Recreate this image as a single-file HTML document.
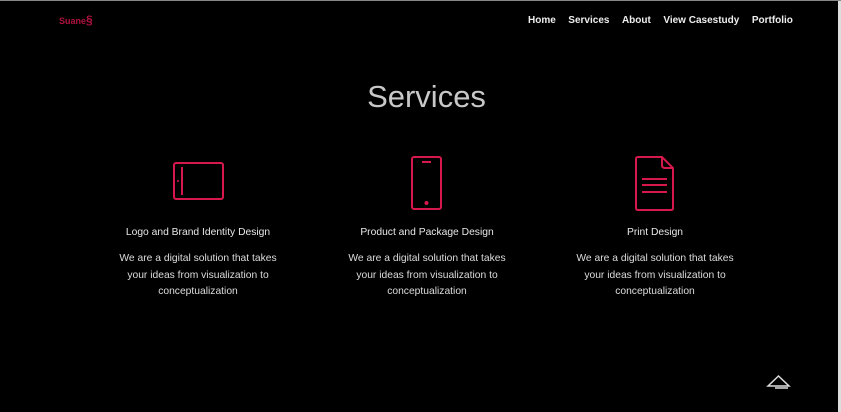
<!DOCTYPE html>
<html><head><style>
html,body{margin:0;padding:0;}
body{width:841px;height:411px;background:#000;position:relative;overflow:hidden;font-family:"Liberation Sans",sans-serif;border-top:1px solid #888;box-sizing:border-box;}
.edge{position:absolute;right:0;top:0;width:3px;height:411px;background:#ddd;}
.logo{position:absolute;left:59px;top:12px;color:#b0123f;font-size:9px;font-weight:bold;}
.nav{position:absolute;top:14px;left:528px;color:#eee;font-size:10px;font-weight:bold;white-space:nowrap;}
.nav span{margin-right:12.5px;}
h1{position:absolute;top:78px;left:6px;width:841px;text-align:center;margin:0;font-weight:normal;font-size:31px;color:#c8c8c8;}
.col{position:absolute;top:226px;width:200px;text-align:center;color:#e8e8e8;font-size:10.3px;}
.col b{display:block;font-weight:normal;margin-bottom:13px;}
.col p{margin:0;line-height:16.5px;color:#ddd;}
svg{position:absolute;}
</style></head><body>
<div class="edge"></div>
<div class="logo">Suane<span style="font-size:12px">§</span></div>
<div class="nav"><span>Home</span><span>Services</span><span>About</span><span>View Casestudy</span><span>Portfolio</span></div>
<h1>Services</h1>
<svg style="left:172px;top:160px" width="54" height="42"><rect x="2" y="2" width="49" height="36" rx="2" fill="none" stroke="#d6184d" stroke-width="2"/><line x1="10" y1="6" x2="10" y2="34" stroke="#d6184d" stroke-width="2"/><circle cx="6" cy="20" r="1" fill="#d6184d"/></svg>
<svg style="left:410px;top:154px" width="34" height="58"><rect x="2" y="2" width="29" height="52" rx="2" fill="none" stroke="#d6184d" stroke-width="2"/><line x1="12" y1="7" x2="21" y2="7" stroke="#d6184d" stroke-width="2"/><circle cx="16.5" cy="48" r="2" fill="#d6184d"/></svg>
<svg style="left:634px;top:154px" width="42" height="58"><path d="M4 2H28L39 13V53Q39 55 37 55H4Q2 55 2 53V4Q2 2 4 2Z" fill="none" stroke="#d6184d" stroke-width="2"/><path d="M28 2V10Q28 13 31 13H39" fill="none" stroke="#d6184d" stroke-width="2"/><line x1="8" y1="24" x2="33" y2="24" stroke="#d6184d" stroke-width="2"/><line x1="8" y1="30" x2="33" y2="30" stroke="#d6184d" stroke-width="2"/><line x1="8" y1="37" x2="33" y2="37" stroke="#d6184d" stroke-width="2"/></svg>
<div class="col" style="left:98px"><b>Logo and Brand Identity Design</b><p>We are a digital solution that takes<br>your ideas from visualization to<br>conceptualization</p></div>
<div class="col" style="left:327px"><b>Product and Package Design</b><p>We are a digital solution that takes<br>your ideas from visualization to<br>conceptualization</p></div>
<div class="col" style="left:555px"><b>Print Design</b><p>We are a digital solution that takes<br>your ideas from visualization to<br>conceptualization</p></div>
<svg style="left:766px;top:373px" width="26" height="16"><path d="M2 12L12.5 2L23 12Z" fill="none" stroke="#ddd" stroke-width="1.5"/><line x1="9" y1="14" x2="22" y2="14" stroke="#ddd" stroke-width="1.5"/></svg>
</body></html>
